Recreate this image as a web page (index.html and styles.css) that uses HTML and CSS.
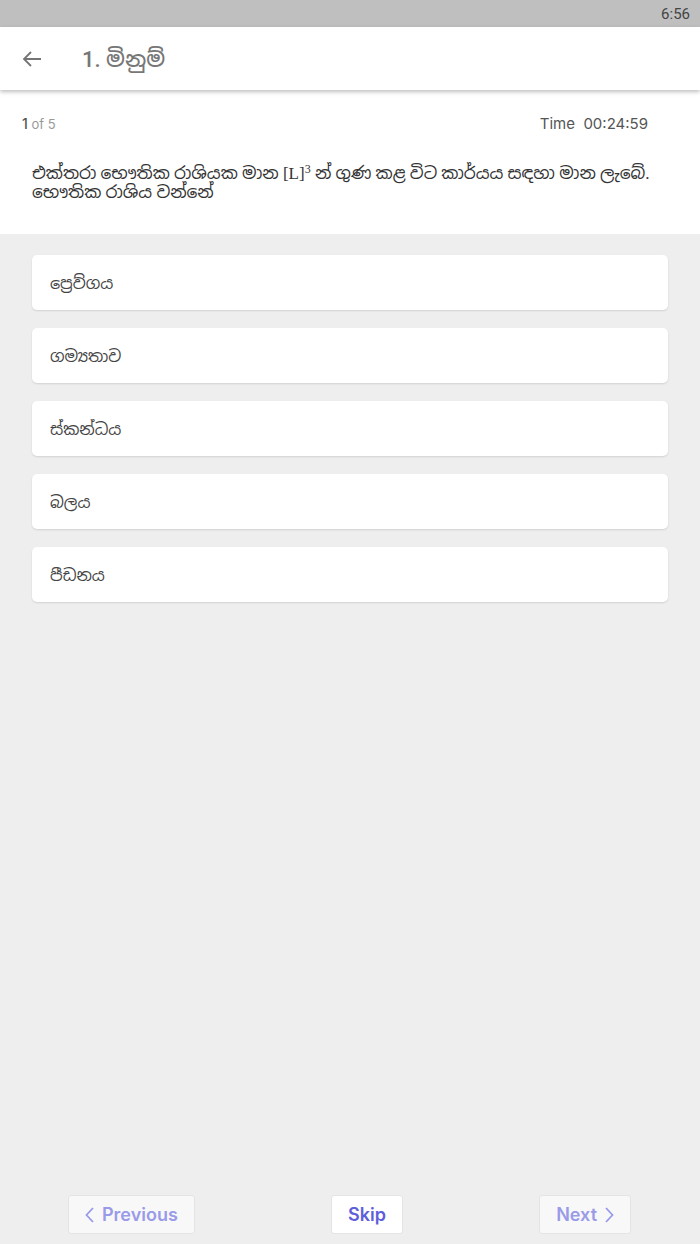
FILE: index.html
```html
<!DOCTYPE html>
<html lang="si">
  <head>
    <meta charset="UTF-8" />
    <meta name="viewport" content="width=device-width, initial-scale=1.0" />
    <title>මිනුම්</title>
    <link rel="stylesheet" href="styles.css">
  </head>
  <body>
    <div class="status">6:56</div>

    <div class="appbar">
      <svg class="back" width="20" height="20" viewBox="0 0 20 20">
        <path d="M19 10H2M9 3L2 10l7 7" fill="none" stroke="#757575" stroke-width="1.8"/>
      </svg>
      <h1 class="title">1. මිනුම්</h1>
    </div>

    <div class="info">
      <div class="meta">
        <span class="count"><b>1</b> of 5</span>
        <span class="timer">Time&nbsp; 00:24:59</span>
      </div>
      <p class="question">එක්තරා භෞතික රාශියක මාන [L]<span class="pow">3</span> න් ගුණ කළ විට කාර්යය සඳහා මාන ලැබේ. භෞතික රාශිය වන්නේ</p>
    </div>

    <div class="options">
      <div class="option">ප්‍රෙව්ගය</div>
      <div class="option">ගම්‍යතාව</div>
      <div class="option">ස්කන්ධය</div>
      <div class="option">බලය</div>
      <div class="option">පීඩනය</div>
    </div>

    <div class="footer">
      <button class="nav disabled">
        <svg width="9" height="16" viewBox="0 0 9 16"><path d="M8 1L1.5 8 8 15" fill="none" stroke="currentColor" stroke-width="1.8"/></svg>
        Previous
      </button>
      <button class="nav skip">Skip</button>
      <button class="nav disabled">
        Next
        <svg width="9" height="16" viewBox="0 0 9 16"><path d="M1 1l6.5 7L1 15" fill="none" stroke="currentColor" stroke-width="1.8"/></svg>
      </button>
    </div>
  </body>
</html>
```

FILE: styles.css
```css
*{
    margin: 0;
    padding: 0;
    box-sizing: border-box;
}

body{
    font-family: "Noto Sans", "Noto Sans Sinhala", "Iskoola Pota", sans-serif;
    background-color: #eeeeee;
    min-height: 100vh;
    display: flex;
    flex-direction: column;
    color: #333333;
}

.status{
    height: 27px;
    background-color: #bfbfbf;
    color: #444444;
    font-family: "Roboto", sans-serif;
    font-size: 15px;
    text-align: right;
    padding: 5px 10px 0 0;
}

.appbar{
    height: 63px;
    background-color: #ffffff;
    display: flex;
    align-items: center;
    padding-left: 22px;
    box-shadow: 0 2px 4px rgba(0, 0, 0, 0.25);
    position: relative;
    z-index: 1;
}

.back{
    margin-top: 1px;
}

.title{
    margin-left: 40px;
    font-family: "Roboto", "Noto Sans Sinhala", sans-serif;
    font-size: 22px;
    font-weight: 500;
    color: #777777;
}

.info{
    background-color: #ffffff;
    height: 144px;
    padding: 24px 52px 0 22px;
}

.meta{
    display: flex;
    justify-content: space-between;
    align-items: center;
    font-family: "Inter", sans-serif;
}

.count{
    font-size: 13px;
    color: #999999;
}

.count b{
    font-weight: 500;
    font-size: 14px;
    color: #555555;
}

.timer{
    font-size: 15px;
    color: #555555;
}

.question{
    margin: 31px -40px 0 10px;
    font-family: "Liberation Serif", "Noto Sans Sinhala", "Noto Sans", serif;
    font-size: 17px;
    line-height: 19px;
    color: #333333;
}

.pow{
    font-size: 12px;
    vertical-align: 6px;
    line-height: 0;
}

.options{
    flex: 1;
    padding: 21px 32px 0 32px;
    display: flex;
    flex-direction: column;
    gap: 18px;
}

.option{
    height: 55px;
    background-color: #ffffff;
    border-radius: 5px;
    box-shadow: 0 1px 2px rgba(0, 0, 0, 0.12);
    display: flex;
    align-items: center;
    padding-left: 18px;
    font-size: 16px;
    color: #444444;
}

.footer{
    display: flex;
    justify-content: space-between;
    padding: 0 69px 10px 68px;
}

.nav{
    height: 39px;
    padding: 0 16px;
    border: 1px solid #e4e4e4;
    border-radius: 3px;
    background-color: #ffffff;
    font-family: "Inter", sans-serif;
    font-size: 18px;
    font-weight: 600;
    color: #5e5fd9;
    display: flex;
    align-items: center;
    gap: 8px;
}

.nav.disabled{
    background-color: #f8f8f8;
    color: #9a9be8;
}
```
